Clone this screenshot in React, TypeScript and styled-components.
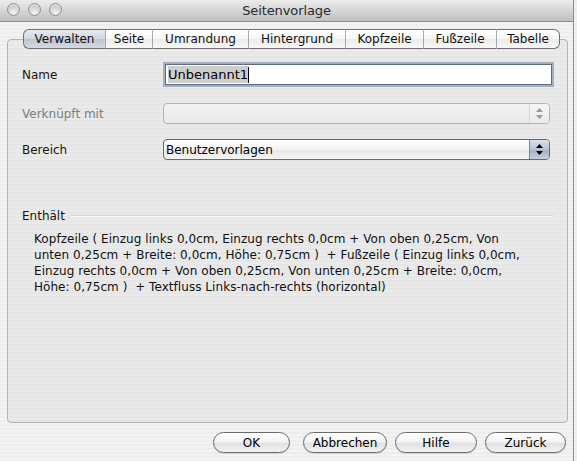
import React from "react";
import styled, { createGlobalStyle } from "styled-components";

const GlobalStyle = createGlobalStyle`
  html, body {
    margin: 0;
    padding: 0;
    width: 577px;
    height: 461px;
    overflow: hidden;
    background: repeating-linear-gradient(to bottom, #ececec 0, #ececec 2px, #f2f2f2 2px, #f2f2f2 4px);
    font-family: "DejaVu Sans", "Liberation Sans", sans-serif;
  }
  #root { width: 577px; height: 461px; }
`;

const stripes = (a: string, b: string) =>
  `repeating-linear-gradient(to bottom, ${a} 0, ${a} 2px, ${b} 2px, ${b} 4px)`;

const Window = styled.div`
  width: 574px;
  height: 461px;
  box-sizing: border-box;
  border-right: 1px solid #8e8e8e;
  display: flex;
  flex-direction: column;
  background: ${stripes("#ededed", "#f3f3f3")};
`;

const TitleBar = styled.div`
  height: 22px;
  box-sizing: border-box;
  flex: none;
  position: relative;
  display: flex;
  align-items: center;
  justify-content: center;
  background: linear-gradient(to bottom, #ececec 0%, #d6d6d6 50%, #c0c0c0 100%);
  border-bottom: 1px solid #8a8a8a;
`;

const Lights = styled.div`
  position: absolute;
  left: 7px;
  top: 3px;
  display: flex;
  gap: 8px;
`;

const Light = styled.span`
  width: 13px;
  height: 13px;
  border-radius: 50%;
  box-sizing: border-box;
  border: 1px solid #8f8f8f;
  background: radial-gradient(circle at 50% 80%, #f4f4f4 0%, #d8d8d8 45%, #b6b6b6 100%);
  box-shadow: inset 0 1px 1px rgba(255, 255, 255, 0.7);
`;

const Title = styled.div`
  font-size: 13px;
  color: #2a2a2a;
  letter-spacing: -0.1px;
`;

const Body = styled.div`
  flex: 1;
  display: flex;
  flex-direction: column;
  padding: 7px 5px 0 7px;
`;

const TabRow = styled.div`
  display: flex;
  margin-left: 16px;
  height: 20px;
  margin-bottom: -10px;
  position: relative;
  z-index: 1;
`;

const Tab = styled.div<{ $w: number; $active?: boolean; $first?: boolean; $last?: boolean }>`
  width: ${(p) => p.$w}px;
  box-sizing: border-box;
  height: 20px;
  display: flex;
  align-items: center;
  justify-content: center;
  font-size: 12px;
  color: #111;
  border-top: 1px solid #707070;
  border-bottom: 1px solid #707070;
  border-left: ${(p) => (p.$first ? "1px solid #707070" : "1px solid #a9a9a9")};
  border-right: ${(p) => (p.$last ? "1px solid #707070" : "none")};
  border-radius: ${(p) => (p.$first ? "6px 0 0 6px" : p.$last ? "0 6px 6px 0" : "0")};
  background: ${(p) =>
    p.$active
      ? "linear-gradient(to bottom, #e6eaf0 0%, #cfd5de 50%, #bcc4d0 51%, #d4dae3 100%)"
      : "linear-gradient(to bottom, #ffffff 0%, #f6f6f6 50%, #ebebeb 51%, #f8f8f8 100%)"};
`;

const Panel = styled.div`
  height: 384px;
  box-sizing: border-box;
  border: 1px solid #b4b4b4;
  border-radius: 4px;
  background: ${stripes("#e6e6e6", "#eaeaea")};
  padding: 22px 14px 0 14px;
  display: flex;
  flex-direction: column;
`;

const FieldRow = styled.div<{ $h: number; $mt: number }>`
  display: flex;
  align-items: center;
  height: ${(p) => p.$h}px;
  margin-top: ${(p) => p.$mt}px;
`;

const Label = styled.div<{ $disabled?: boolean }>`
  width: 141px;
  flex: none;
  font-size: 12px;
  color: ${(p) => (p.$disabled ? "#7d7d7d" : "#1c1408")};
`;

const TextInput = styled.div`
  width: 387px;
  height: 21px;
  margin-left: 2px;
  box-sizing: border-box;
  border: 1px solid #5f6d80;
  box-shadow: 0 0 0 2px #a5b0bf;
  background: #fff;
  display: flex;
  align-items: center;
  padding-left: 2px;
  font-size: 13px;
  color: #000;
`;

const Selected = styled.span`
  background: #cdcdcd;
  padding: 1px 0;
`;

const Caret = styled.span`
  width: 1px;
  height: 16px;
  background: #000;
`;

const Select = styled.div<{ $disabled?: boolean }>`
  width: 387px;
  height: 21px;
  box-sizing: border-box;
  border: 1px solid ${(p) => (p.$disabled ? "#b3b3b3" : "#6a6a6a")};
  border-radius: 4px;
  display: flex;
  overflow: hidden;
  background: ${(p) =>
    p.$disabled
      ? "linear-gradient(to bottom, #f2f2f2, #e9e9e9)"
      : "linear-gradient(to bottom, #ffffff 0%, #f3f3f3 50%, #e8e8e8 51%, #f4f4f4 100%)"};
`;

const SelectText = styled.div`
  flex: 1;
  font-size: 12px;
  color: #000;
  display: flex;
  align-items: center;
  padding-left: 2px;
`;

const ArrowBox = styled.div<{ $disabled?: boolean }>`
  width: 19px;
  flex: none;
  display: flex;
  align-items: center;
  justify-content: center;
  border-left: 1px solid ${(p) => (p.$disabled ? "#d6d6d6" : "#7a8597")};
  background: ${(p) =>
    p.$disabled
      ? "linear-gradient(to bottom, #f6f6f6, #ebebeb)"
      : "linear-gradient(to bottom, #d9e0ea 0%, #b9c3d2 50%, #a4b0c2 51%, #c6cfdc 100%)"};
`;

const Section = styled.div`
  margin-top: 48px;
  display: flex;
  flex-direction: column;
`;

const SectionHead = styled.div`
  display: flex;
  align-items: center;
  height: 16px;
`;

const SectionTitle = styled.div`
  font-size: 12px;
  color: #1c1408;
  margin-right: 6px;
`;

const Rule = styled.div`
  flex: 1;
  height: 0;
  border-top: 1px solid #d2d2d2;
  border-bottom: 1px solid #fafafa;
`;

const Paragraph = styled.div`
  margin-top: 7px;
  padding-left: 12px;
  font-size: 12px;
  line-height: 16px;
  letter-spacing: 0.05px;
  color: #111;
`;

const Line = styled.div`
  white-space: pre;
`;

const ButtonRow = styled.div`
  display: flex;
  justify-content: flex-end;
  align-items: center;
  padding: 9px 2px 0 0;
  gap: 8px;
`;

const Button = styled.div<{ $w: number; $mr?: number }>`
  width: ${(p) => p.$w}px;
  height: 21px;
  box-sizing: border-box;
  margin-right: ${(p) => p.$mr ?? 0}px;
  border: 1px solid #6b6b6b;
  border-radius: 11px;
  display: flex;
  align-items: center;
  justify-content: center;
  font-size: 12px;
  color: #000;
  background: linear-gradient(to bottom, #ffffff 0%, #f4f4f4 45%, #e2e2e2 55%, #f2f2f2 100%);
  box-shadow: 0 1px 1px rgba(0, 0, 0, 0.12);
`;

const Arrows: React.FC<{ disabled?: boolean }> = ({ disabled }) => (
  <svg width="7" height="11" viewBox="0 0 7 11">
    <polygon points="3.5,0 7,4 0,4" fill={disabled ? "#9a9a9a" : "#000"} />
    <polygon points="0,7 7,7 3.5,11" fill={disabled ? "#9a9a9a" : "#000"} />
  </svg>
);

const tabs: { label: string; w: number }[] = [
  { label: "Verwalten", w: 82 },
  { label: "Seite", w: 47 },
  { label: "Umrandung", w: 96 },
  { label: "Hintergrund", w: 97 },
  { label: "Kopfzeile", w: 78 },
  { label: "Fußzeile", w: 73 },
  { label: "Tabelle", w: 64 },
];

const lines = [
  "Kopfzeile ( Einzug links 0,0cm, Einzug rechts 0,0cm + Von oben 0,25cm, Von",
  "unten 0,25cm + Breite: 0,0cm, Höhe: 0,75cm )  + Fußzeile ( Einzug links 0,0cm,",
  "Einzug rechts 0,0cm + Von oben 0,25cm, Von unten 0,25cm + Breite: 0,0cm,",
  "Höhe: 0,75cm )  + Textfluss Links-nach-rechts (horizontal)",
];

export default function App() {
  return (
    <>
      <GlobalStyle />
      <Window>
        <TitleBar>
          <Lights>
            <Light />
            <Light />
            <Light />
          </Lights>
          <Title>Seitenvorlage</Title>
        </TitleBar>
        <Body>
          <TabRow>
            {tabs.map((t, i) => (
              <Tab
                key={t.label}
                $w={t.w}
                $active={i === 0}
                $first={i === 0}
                $last={i === tabs.length - 1}
              >
                {t.label}
              </Tab>
            ))}
          </TabRow>
          <Panel>
            <FieldRow $h={25} $mt={0}>
              <Label>Name</Label>
              <TextInput>
                <Selected>Unbenannt1</Selected>
                <Caret />
              </TextInput>
            </FieldRow>
            <FieldRow $h={21} $mt={16}>
              <Label $disabled>Verknüpft mit</Label>
              <Select $disabled>
                <SelectText />
                <ArrowBox $disabled>
                  <Arrows disabled />
                </ArrowBox>
              </Select>
            </FieldRow>
            <FieldRow $h={21} $mt={15}>
              <Label>Bereich</Label>
              <Select>
                <SelectText>Benutzervorlagen</SelectText>
                <ArrowBox>
                  <Arrows />
                </ArrowBox>
              </Select>
            </FieldRow>
            <Section>
              <SectionHead>
                <SectionTitle>Enthält</SectionTitle>
                <Rule />
              </SectionHead>
              <Paragraph>
                {lines.map((l) => (
                  <Line key={l}>{l}</Line>
                ))}
              </Paragraph>
            </Section>
          </Panel>
          <ButtonRow>
            <Button $w={77} $mr={5}>OK</Button>
            <Button $w={84}>Abbrechen</Button>
            <Button $w={82}>Hilfe</Button>
            <Button $w={81}>Zurück</Button>
          </ButtonRow>
        </Body>
      </Window>
    </>
  );
}
